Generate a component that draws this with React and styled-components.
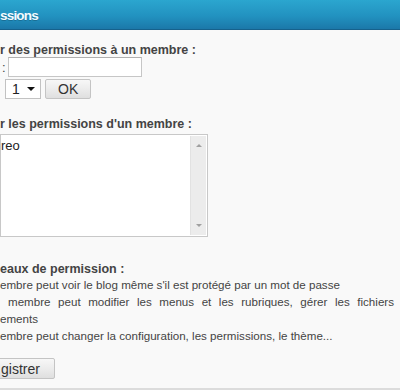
import React from 'react'
import styled, { createGlobalStyle } from 'styled-components'

const Global = createGlobalStyle`
  html, body {
    margin: 0;
    padding: 0;
    background: #f9f9f9;
  }
  body {
    font-family: "Liberation Sans", Arial, sans-serif;
    color: #444;
    overflow: hidden;
  }
`

const Panel = styled.div`
  width: 400px;
  height: 390px;
  display: flex;
  flex-direction: column;
  background: #f9f9f9;
  border-bottom: 2px solid #dcdcdc;
  box-sizing: border-box;
  overflow: hidden;
`

const Header = styled.div`
  height: 30px;
  flex: none;
  display: flex;
  align-items: center;
  background: linear-gradient(to bottom, #2ba6cf 0%, #2292c0 55%, #1b78a9 100%);
  border-bottom: 1px solid #16618c;
  box-sizing: border-box;
  padding-top: 1px;

  h2 {
    margin: 0;
    font-size: 13.5px;
    letter-spacing: -0.8px;
    font-weight: bold;
    color: #f4fbff;
    text-shadow: 0 1px 0 rgba(0, 0, 0, 0.2);
  }
`

const Body = styled.div`
  display: flex;
  flex-direction: column;
  padding-top: 13px;
`

const Heading = styled.h3`
  margin: ${({ $mt }) => $mt || 0}px 0 0;
  font-size: 12.5px;
  line-height: 14px;
  font-weight: bold;
  color: #444;
  white-space: nowrap;
`

const Row = styled.div`
  display: flex;
  align-items: center;
  gap: ${({ $gap }) => $gap ?? 4}px;
  margin-top: ${({ $mt }) => $mt || 0}px;
  padding-left: ${({ $pl }) => $pl || 0}px;
  font-size: 13px;
  color: #444;
`

const TextInput = styled.input`
  width: 134px;
  height: 20px;
  box-sizing: border-box;
  border: 1px solid #c6c6c6;
  border-top-color: #b0b0b0;
  background: #fff;
  padding: 0 3px;
  font: 12px "Liberation Sans", Arial, sans-serif;
  outline: none;
`

const SelectBox = styled.div`
  position: relative;
  width: 36px;
  height: 20px;
  box-sizing: border-box;
  border: 1px solid #c2c2c2;
  background: #fff;
  display: flex;
  align-items: center;
  padding-left: 6px;
  font-size: 14px;
  color: #222;

  select {
    position: absolute;
    inset: 0;
    opacity: 0;
  }
`

const Caret = styled.span`
  margin-left: auto;
  margin-right: 5px;
  width: 0;
  height: 0;
  border-left: 4px solid transparent;
  border-right: 4px solid transparent;
  border-top: 4px solid #111;
`

const Button = styled.button`
  height: ${({ $h }) => $h ?? 20}px;
  padding: 0 ${({ $px }) => $px ?? 13}px;
  margin-left: ${({ $ml }) => $ml ?? 0}px;
  border: 1px solid #c4c4c4;
  border-radius: 2px;
  background: linear-gradient(to bottom, #f7f7f7 0%, #ececec 50%, #dfdfdf 100%);
  font: 14px "Liberation Sans", Arial, sans-serif;
  color: #333;
  line-height: 1;
  cursor: pointer;
`

const ListBox = styled.div`
  margin-top: 3px;
  width: 208px;
  height: 103px;
  box-sizing: border-box;
  border: 1px solid #c8c8c8;
  background: #fff;
  display: flex;
`

const ListItems = styled.div`
  flex: 1;
  padding-top: 3px;
  font-size: 13px;
  line-height: 16px;
  color: #222;
`

const ScrollTrack = styled.div`
  width: 16px;
  margin: 1px 1px 1px 0;
  background: #ececec;
  border-left: 1px solid #e2e2e2;
  display: flex;
  flex-direction: column;
  justify-content: space-between;
  align-items: center;
  padding: 8px 0;
  box-sizing: border-box;
`

const Arrow = styled.span`
  width: 0;
  height: 0;
  border-left: 3px solid transparent;
  border-right: 3px solid transparent;
  ${({ $up }) =>
    $up ? 'border-bottom: 3px solid #a0a0a0;' : 'border-top: 3px solid #a0a0a0;'}
`

const Levels = styled.div`
  font-size: 11.6px;
  line-height: 17px;
  color: #444;
`

const Line = styled.div`
  white-space: nowrap;
  ${({ $justify }) =>
    $justify &&
    `
    white-space: normal;
    width: 386px;
    padding-left: 8px;
    text-align: justify;
    text-align-last: justify;
  `}
`

const levels = [
  { text: "embre peut voir le blog même s'il est protégé par un mot de passe" },
  { text: 'membre peut modifier les menus et les rubriques, gérer les fichiers', justify: true },
  { text: 'ements' },
  { text: 'embre peut changer la configuration, les permissions, le thème...' },
]

export default function App() {
  return (
    <>
      <Global />
      <Panel>
        <Header>
          <h2>ssions</h2>
        </Header>
        <Body>
          <Heading>r des permissions à un membre :</Heading>
          <Row $pl={2} $gap={2}>
            <span>:</span>
            <TextInput type="text" />
          </Row>
          <Row $pl={5} $mt={2}>
            <SelectBox>
              1
              <Caret />
              <select defaultValue="1">
                <option>1</option>
                <option>2</option>
                <option>3</option>
              </select>
            </SelectBox>
            <Button $px={12}>OK</Button>
          </Row>

          <Heading $mt={18}>r les permissions d'un membre :</Heading>
          <ListBox>
            <ListItems>reo</ListItems>
            <ScrollTrack>
              <Arrow $up />
              <Arrow />
            </ScrollTrack>
          </ListBox>

          <Heading $mt={25}>eaux de permission :</Heading>
          <Levels>
            {levels.map((l, i) => (
              <Line key={i} $justify={l.justify}>
                {l.text}
              </Line>
            ))}
          </Levels>

          <Row $mt={14}>
            <Button $h={21} $px={14} $ml={-14}>
              gistrer
            </Button>
          </Row>
        </Body>
      </Panel>
    </>
  )
}
